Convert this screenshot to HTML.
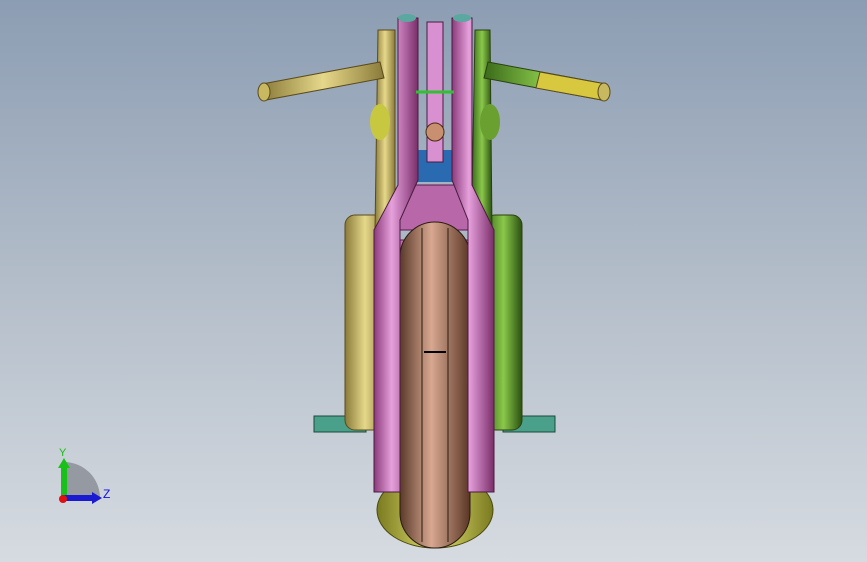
<!DOCTYPE html>
<html><head><style>
html,body{margin:0;padding:0;width:867px;height:562px;overflow:hidden}
body{background:linear-gradient(#8c9db3 0%,#b3bdc9 50%,#d6dbe1 100%)}
svg{position:absolute;left:0;top:0}
</style></head><body>
<svg width="867" height="562" viewBox="0 0 867 562" xmlns="http://www.w3.org/2000/svg">
<defs>
<linearGradient id="tire" x1="0" x2="1"><stop offset="0" stop-color="#5a3a2a"/><stop offset="0.45" stop-color="#d8a890"/><stop offset="1" stop-color="#5a3626"/></linearGradient>
<linearGradient id="pink" x1="0" x2="1"><stop offset="0" stop-color="#8a3a7a"/><stop offset="0.4" stop-color="#e6a0dc"/><stop offset="1" stop-color="#7a2e6a"/></linearGradient>
<linearGradient id="yel" x1="0" x2="1"><stop offset="0" stop-color="#8a7a3a"/><stop offset="0.5" stop-color="#e6d88a"/><stop offset="1" stop-color="#8a7a3a"/></linearGradient>
<linearGradient id="grn" x1="0" x2="1"><stop offset="0" stop-color="#3a6a1a"/><stop offset="0.5" stop-color="#8ac84a"/><stop offset="1" stop-color="#2a5010"/></linearGradient>
<linearGradient id="fend" x1="0" x2="1"><stop offset="0" stop-color="#7a7a20"/><stop offset="0.5" stop-color="#e0e070"/><stop offset="1" stop-color="#7a7a20"/></linearGradient>
</defs>
<!-- footpegs -->
<rect x="314" y="416" width="52" height="16" fill="#4aa08a" stroke="#1a4a3a"/>
<rect x="503" y="416" width="52" height="16" fill="#4aa08a" stroke="#1a4a3a"/>
<!-- body sides -->
<rect x="345" y="215" width="40" height="215" rx="10" fill="url(#yel)" stroke="#5a4a1a"/>
<rect x="485" y="215" width="37" height="215" rx="10" fill="url(#grn)" stroke="#2a4010"/>
<!-- upper frame -->
<path d="M378 30 L395 30 L395 200 L380 230 L375 230 Z" fill="url(#yel)" stroke="#5a4a1a"/>
<path d="M475 30 L490 30 L492 230 L478 230 L472 200 Z" fill="url(#grn)" stroke="#2a4010"/>
<ellipse cx="380" cy="122" rx="10" ry="18" fill="#c8c840"/>
<ellipse cx="490" cy="122" rx="10" ry="18" fill="#6aa030"/>
<!-- handlebars -->
<path d="M262 84 L380 62 L384 78 L266 100 Z" fill="url(#yel)" stroke="#5a4a1a"/>
<path d="M488 62 L606 84 L602 100 L484 78 Z" fill="url(#grn)" stroke="#2a4010"/>
<path d="M540 72 L606 84 L602 100 L536 88 Z" fill="#d8c840" stroke="#5a4a1a"/>
<ellipse cx="264" cy="92" rx="6" ry="9" fill="#c8b860" stroke="#5a4a1a"/>
<ellipse cx="604" cy="92" rx="6" ry="9" fill="#c8b860" stroke="#5a4a1a"/>
<!-- blue block -->
<rect x="412" y="150" width="50" height="32" fill="#2a6ab0"/>
<!-- inner pink -->
<rect x="398" y="185" width="74" height="45" fill="#b868a8" stroke="#5a1a50"/>
<rect x="378" y="240" width="114" height="150" fill="#c070b0" stroke="#5a1a50"/>
<!-- fender -->
<ellipse cx="435" cy="510" rx="58" ry="38" fill="url(#fend)" stroke="#4a4a10"/>
<!-- tire -->
<rect x="400" y="222" width="70" height="326" rx="35" fill="url(#tire)" stroke="#2a1a10"/>
<line x1="422" y1="228" x2="422" y2="542" stroke="#2a1a10"/>
<line x1="448" y1="228" x2="448" y2="542" stroke="#2a1a10"/>
<line x1="424" y1="352" x2="446" y2="352" stroke="#000" stroke-width="2"/>
<!-- fork tubes -->
<path d="M398 18 L418 18 L418 180 L400 220 L400 492 L374 492 L374 230 L398 185 Z" fill="url(#pink)" stroke="#4a1a40"/>
<path d="M452 18 L472 18 L472 185 L494 230 L494 492 L468 492 L468 220 L452 180 Z" fill="url(#pink)" stroke="#4a1a40"/>
<ellipse cx="407" cy="18" rx="9" ry="4" fill="#5aa8a0"/>
<ellipse cx="462" cy="18" rx="9" ry="4" fill="#5aa8a0"/>
<!-- stem -->
<rect x="427" y="22" width="16" height="140" fill="#d890d0" stroke="#4a1a40"/>
<circle cx="435" cy="132" r="9" fill="#c89070" stroke="#4a2a10"/>
<line x1="416" y1="92" x2="454" y2="92" stroke="#30c030" stroke-width="3"/>
<!-- triad -->
<path d="M62 500 A38 38 0 0 1 100 500 Z" transform="translate(0,0)" fill="#9aa0a8"/>
<path d="M64 462 A36 36 0 0 1 100 498 L64 498 Z" fill="#9599a1"/>
<rect x="61" y="466" width="6" height="34" fill="#1ac01a"/>
<path d="M58 468 L64 458 L70 468 Z" fill="#1ac01a"/>
<rect x="62" y="495" width="32" height="6" fill="#1a1ad0"/>
<path d="M92 492 L102 498 L92 504 Z" fill="#1a1ad0"/>
<circle cx="63" cy="499" r="4" fill="#e01010"/>
<text x="59" y="456" font-family="Liberation Sans,sans-serif" font-size="11" fill="#10c010">Y</text>
<text x="103" y="498" font-family="Liberation Sans,sans-serif" font-size="12" fill="#1010e0">Z</text>
</svg>
</body></html>
